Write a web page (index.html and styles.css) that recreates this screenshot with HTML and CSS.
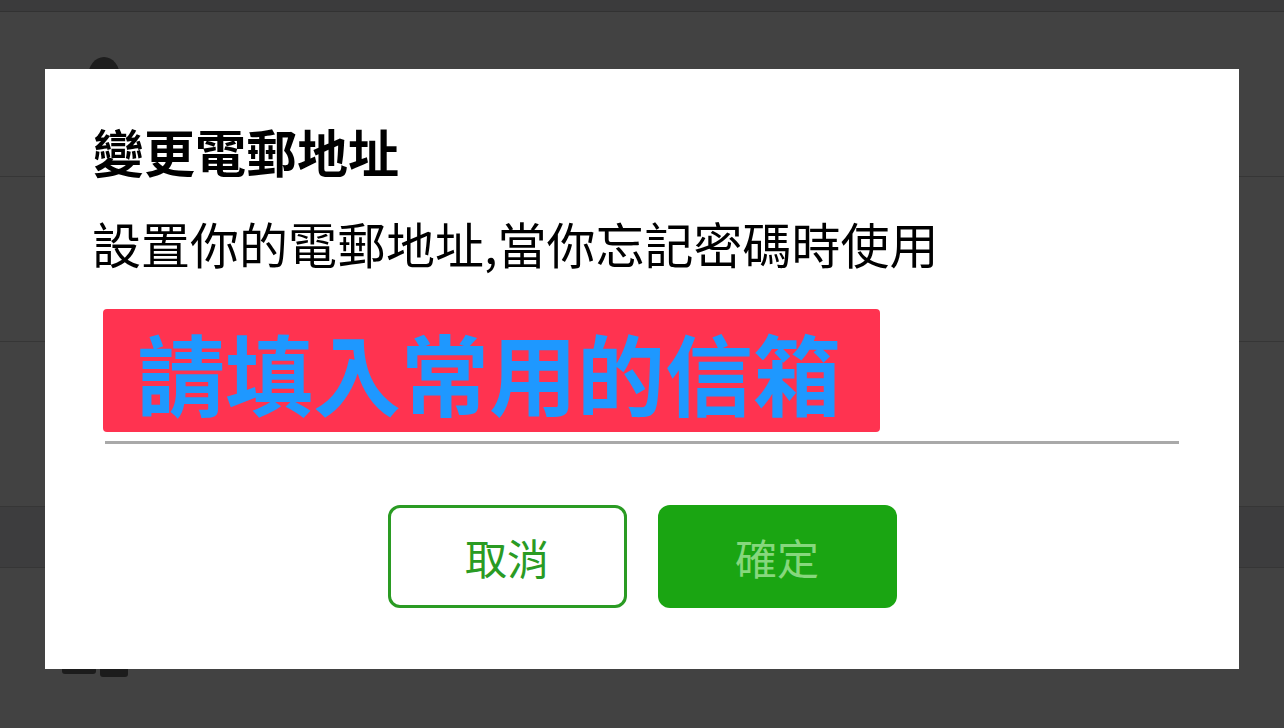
FILE: index.html
```html
<!DOCTYPE html>
<html lang="zh-Hant">
<head>
  <meta charset="UTF-8">
  <meta name="viewport" content="width=device-width, initial-scale=1.0">
  <title>變更電郵地址</title>
  <link rel="stylesheet" href="styles.css">
</head>
<body>
  <div class="screen">
    <div class="topbar"></div>
    <div class="row row-profile">
      <span class="avatar"></span>
    </div>
    <div class="row"></div>
    <div class="row"></div>
    <div class="strip"></div>
    <div class="row row-last">
      <span class="icon-a"></span>
      <span class="icon-b"></span>
      <span class="row-label">電郵地址設定</span>
    </div>

    <div class="overlay">
      <div class="dialog">
        <h2 class="title">變更電郵地址</h2>
        <p class="desc">設置你的電郵地址,當你忘記密碼時使用</p>
        <div class="field">
          <span class="hint">請填入常用的信箱</span>
        </div>
        <div class="actions">
          <button class="btn btn-cancel">取消</button>
          <button class="btn btn-ok">確定</button>
        </div>
      </div>
    </div>
  </div>
</body>
</html>
```

FILE: styles.css
```css
html, body {
  margin: 0;
  padding: 0;
}

body {
  font-family: "Noto Sans CJK TC", "Noto Sans", sans-serif;
  background-color: #424242;
}

.screen {
  position: relative;
  width: 1284px;
  height: 728px;
  overflow: hidden;
  display: flex;
  flex-direction: column;
  background-color: #424242;
}

.topbar {
  height: 11px;
  background-color: #3b3b3c;
  border-bottom: 1px solid #323232;
  flex-shrink: 0;
}

.row {
  height: 164px;
  border-bottom: 1px solid #363636;
  flex-shrink: 0;
  position: relative;
}

.strip {
  height: 60px;
  background-color: #3d3d3e;
  border-bottom: 1px solid #363636;
  flex-shrink: 0;
}

.row-last {
  flex: 1;
  border-bottom: none;
  display: flex;
  align-items: flex-start;
  gap: 4px;
  padding-left: 62px;
  padding-top: 80px;
}

.avatar {
  position: absolute;
  left: 88px;
  top: 45px;
  width: 32px;
  height: 40px;
  border-radius: 50%;
  background-color: #1e1e1e;
}

.icon-a, .icon-b {
  display: inline-block;
  height: 26px;
  background-color: #1c1c1c;
  border-radius: 3px;
}

.icon-a {
  width: 34px;
}

.icon-b {
  width: 28px;
  height: 29px;
  margin-right: 53px;
}

.row-label {
  margin-top: -11px;
  font-size: 30px;
  line-height: 30px;
  color: #1c1c1c;
}

.overlay {
  position: absolute;
  left: 0;
  top: 0;
  right: 0;
  bottom: 0;
}

.dialog {
  position: absolute;
  left: 45px;
  top: 69px;
  width: 1194px;
  height: 600px;
  box-sizing: border-box;
  background-color: #fff;
  padding: 46px 60px 0 48px;
}

.title {
  margin: 0;
  font-size: 51px;
  font-weight: 700;
  line-height: 72px;
  color: #000;
}

.desc {
  margin: 24px 0 0;
  font-size: 49px;
  line-height: 64px;
  color: #000;
  margin-left: -1px;
}

.field {
  margin: 34px 0 0 12px;
  border-bottom: 3px solid #a9a9a9;
  padding-bottom: 9px;
}

.hint {
  display: inline-block;
  background-color: #ff3350;
  color: #1e98ff;
  font-size: 88px;
  font-weight: 700;
  line-height: 123px;
  padding: 0 39px 0 34px;
  border-radius: 4px;
  margin-left: -2px;
}

.actions {
  display: flex;
  justify-content: center;
  gap: 31px;
  margin-top: 61px;
  padding-left: 12px;
}

.btn {
  width: 239px;
  height: 103px;
  box-sizing: border-box;
  border-radius: 12px;
  font-family: "Noto Sans CJK TC", sans-serif;
  font-size: 42px;
  cursor: pointer;
}

.btn-cancel {
  background-color: #fff;
  border: 3px solid #2a9b23;
  color: #2a9b23;
}

.btn-ok {
  background-color: #1aa512;
  border: none;
  color: #86d77d;
}
```
